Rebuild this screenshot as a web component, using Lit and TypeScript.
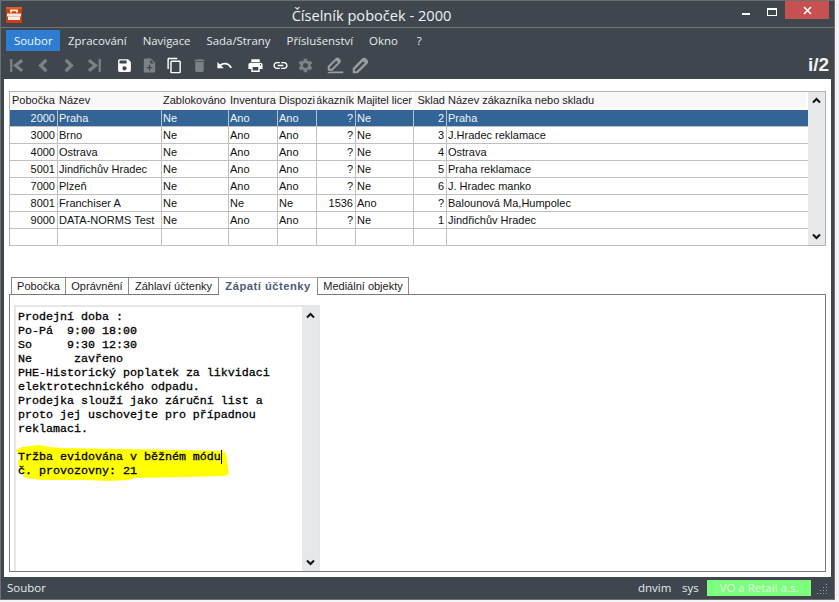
import { LitElement, html, css, svg } from "lit";
import { customElement } from "lit/decorators.js";

const I: Record<string, any> = {
  first: svg`<path d="M3 3h3.2v18H3z"/><path d="M20 4.5L10.5 12l9.5 7.5" fill="none" stroke="currentColor" stroke-width="4.4"/>`,
  prev: svg`<path d="M16 4l-8 8 8 8" fill="none" stroke="currentColor" stroke-width="4.8"/>`,
  next: svg`<path d="M8 4l8 8-8 8" fill="none" stroke="currentColor" stroke-width="4.8"/>`,
  last: svg`<path d="M17.8 3H21v18h-3.2z"/><path d="M4 4.5L13.5 12 4 19.5" fill="none" stroke="currentColor" stroke-width="4.4"/>`,
  save: svg`<path d="M17 3H5c-1.11 0-2 .9-2 2v14c0 1.1.89 2 2 2h14c1.1 0 2-.9 2-2V7l-4-4zm-5 16c-1.66 0-3-1.34-3-3s1.34-3 3-3 3 1.34 3 3-1.34 3-3 3zm3-10H5V5h10v4z"/>`,
  add: svg`<path d="M14 2H6c-1.1 0-2 .9-2 2v16c0 1.1.9 2 2 2h12c1.1 0 2-.9 2-2V8l-6-6zm2 14h-3v3h-2v-3H8v-2h3v-3h2v3h3v2zm-3-7V3.5L18.5 9H13z"/>`,
  copy: svg`<path d="M16 1H4c-1.1 0-2 .9-2 2v14h2V3h12V1zm3 4H8c-1.1 0-2 .9-2 2v14c0 1.1.9 2 2 2h11c1.1 0 2-.9 2-2V7c0-1.1-.9-2-2-2zm0 16H8V7h11v14z"/>`,
  trash: svg`<path d="M6 19c0 1.1.9 2 2 2h8c1.1 0 2-.9 2-2V7H6v12zM19 4h-3.5l-1-1h-5l-1 1H5v2h14V4z"/>`,
  undo: svg`<path d="M12.5 8c-2.65 0-5.05.99-6.9 2.6L2 7v9h9l-3.62-3.62c1.39-1.16 3.16-1.88 5.12-1.88 3.54 0 6.55 2.31 7.6 5.5l2.37-.78C21.08 11.03 17.15 8 12.5 8z"/>`,
  print: svg`<path d="M19 8H5c-1.66 0-3 1.34-3 3v6h4v4h12v-4h4v-6c0-1.66-1.34-3-3-3zm-3 11H8v-5h8v5zm3-7c-.55 0-1-.45-1-1s.45-1 1-1 1 .45 1 1-.45 1-1 1zm-1-9H6v4h12V3z"/>`,
  link: svg`<path d="M3.9 12c0-1.71 1.39-3.1 3.1-3.1h4V7H7c-2.76 0-5 2.24-5 5s2.24 5 5 5h4v-1.9H7c-1.71 0-3.1-1.39-3.1-3.1zM8 13h8v-2H8v2zm9-6h-4v1.9h4c1.71 0 3.1 1.39 3.1 3.1s-1.39 3.1-3.1 3.1h-4V17h4c2.76 0 5-2.24 5-5s-2.24-5-5-5z"/>`,
  gear: svg`<path d="M19.14 12.94c.04-.3.06-.61.06-.94 0-.32-.02-.64-.07-.94l2.03-1.58a.49.49 0 0 0 .12-.61l-1.92-3.32a.488.488 0 0 0-.59-.22l-2.39.96c-.5-.38-1.03-.7-1.62-.94l-.36-2.54a.484.484 0 0 0-.48-.41h-3.84c-.24 0-.43.17-.47.41l-.36 2.54c-.59.24-1.13.57-1.62.94l-2.39-.96c-.22-.08-.47 0-.59.22L2.74 8.87c-.12.21-.08.47.12.61l2.03 1.58c-.05.3-.09.63-.09.94s.02.64.07.94l-2.03 1.58a.49.49 0 0 0-.12.61l1.92 3.32c.12.22.37.29.59.22l2.39-.96c.5.38 1.03.7 1.62.94l.36 2.54c.05.24.24.41.48.41h3.84c.24 0 .44-.17.47-.41l.36-2.54c.59-.24 1.13-.56 1.62-.94l2.39.96c.22.08.47 0 .59-.22l1.92-3.32c.12-.22.07-.47-.12-.61l-2.01-1.58zM12 15.6c-1.98 0-3.6-1.62-3.6-3.6s1.62-3.6 3.6-3.6 3.6 1.62 3.6 3.6-1.62 3.6-3.6 3.6z"/>`,
  penline: svg`<path d="M1 19v-6L12 2c1.5-1.5 3.8-1.5 5.3 0l1.2 1.2c1.5 1.5 1.5 3.8 0 5.3L7.5 19.5H2zM4 14v2.5h2.5l9-9L13 5z" fill-rule="evenodd"/><path d="M6 20.5h17V23H1v-1.5z"/>`,
  pen: svg`<path d="M1 23v-7L14 2.5c1.8-1.8 4.6-1.8 6.4 0l1 1c1.8 1.8 1.8 4.6 0 6.4L8 23H1zM4 17.5V20h2.5L18 8.5 15.5 6 4 17.5z" fill-rule="evenodd"/>`,
};

const tools: [string, string, number][] = [
  ["first", "dim", 9.5], ["prev", "dim", 8], ["next", "dim", 9], ["last", "dim", 13],
  ["save", "on", 8], ["add", "dim", 8], ["copy", "on", 8], ["trash", "dim", 8],
  ["undo", "on", 14], ["print", "on", 8], ["link", "on", 8], ["gear", "dim", 13],
  ["penline", "pale", 8], ["pen", "pale", 0],
];

const cols = ["Pobočka", "Název", "Zablokováno", "Inventura", "Dispozice", "Zákazník", "Majitel licence", "Sklad", "Název zákazníka nebo skladu"];
const rows = [
  ["2000", "Praha", "Ne", "Ano", "Ano", "?", "Ne", "2", "Praha"],
  ["3000", "Brno", "Ne", "Ano", "Ano", "?", "Ne", "3", "J.Hradec reklamace"],
  ["4000", "Ostrava", "Ne", "Ano", "Ano", "?", "Ne", "4", "Ostrava"],
  ["5001", "Jindřichův Hradec", "Ne", "Ano", "Ano", "?", "Ne", "5", "Praha reklamace"],
  ["7000", "Plzeň", "Ne", "Ano", "Ano", "?", "Ne", "6", "J. Hradec manko"],
  ["8001", "Franchiser A", "Ne", "Ne", "Ne", "1536", "Ano", "?", "Balounová Ma,Humpolec"],
  ["9000", "DATA-NORMS Test", "Ne", "Ano", "Ano", "?", "Ne", "1", "Jindřichův Hradec"],
  ["", "", "", "", "", "", "", "", ""],
];
const rightCols = new Set([0, 5, 7]);

const up = html`<svg width="9" height="7" viewBox="0 0 9 7"><path d="M1 5.5l3.5-3.5 3.5 3.5" fill="none" stroke="#111" stroke-width="2"/></svg>`;
const down = html`<svg width="9" height="7" viewBox="0 0 9 7"><path d="M1 1.5l3.5 3.5 3.5-3.5" fill="none" stroke="#111" stroke-width="2"/></svg>`;

const footer = `Prodejní doba :
Po-Pá  9:00 18:00
So     9:30 12:30
Ne      zavřeno
PHE-Historický poplatek za likvidaci
elektrotechnického odpadu.
Prodejka slouží jako záruční list a
proto jej uschovejte pro případnou
reklamaci.

Tržba evidována v běžném módu`;

@customElement("app-root")
export class AppRoot extends LitElement {
  static styles = css`
    :host { display: block; width: 839px; height: 602px; background: #f4f4f4; overflow: hidden; }
    .win { width: 835px; height: 600px; box-sizing: border-box; background: #3f464e; border: 1px solid #6d6f72; display: flex; flex-direction: column; font-family: "Open Sans", sans-serif; color: #e8ecef; position: relative; }
    .title { height: 26px; flex: none; border-bottom: 1px solid #73777b; display: flex; position: relative; }
    .logo { margin: 6px 0 0 5px; width: 16px; height: 16px; }
    .caption { position: absolute; left: 0; top: 3px; width: 741px; text-align: center; font-size: 14.6px; line-height: 22px; color: #eef2f5; }
    .ctl { position: absolute; top: 0; right: 5px; display: flex; align-items: flex-start; }
    .min { width: 8px; height: 2px; background: #fff; margin: 12px 17px 0 0; }
    .max { width: 8px; height: 5px; border: 1px solid #fff; border-top-width: 2px; margin: 7px 8px 0 0; }
    .close { width: 44px; height: 18px; background: #c75050; display: flex; align-items: center; justify-content: center; }
    .menu { height: 21px; flex: none; margin-top: 2px; padding-left: 5px; display: flex; font-size: 11.4px; line-height: 22px; }
    .menu span { padding: 0 8px; color: #e6eaee; }
    .menu span.on { background: #2f7dd0; color: #eef5fb; width: 38px; text-align: center; }
    .menu span.wide { padding-right: 11px; }
    .tools { height: 28px; flex: none; display: flex; align-items: center; padding: 1px 0 0 7px; box-sizing: border-box; position: relative; }
    .tools svg { width: 17px; height: 17px; fill: currentColor; flex: none; display: block; }
    .tools .on { color: #fff; }
    .tools .dim { color: #7e8286; }
    .tools .pale { color: #9a9ea2; }
    .ver { position: absolute; right: 5px; top: 2px; font: bold 19px/24px "Liberation Sans", sans-serif; color: #f2f2f2; }
    .content { flex: 1; min-height: 0; margin: 0 3px; background: #fff; padding: 12px 5px 5px 5px; display: flex; flex-direction: column; color: #111; font-family: "Liberation Sans", sans-serif; font-size: 11px; }
    .grid { height: 155px; flex: none; box-sizing: border-box; border: 1px solid #b3b3b3; border-bottom: 0; display: flex; }
    .table { flex: 1; min-width: 0; }
    .row { display: grid; grid-template-columns: 48px 104px 67px 49px 39px 39px 58px 33px 1fr; height: 17px; line-height: 16px; }
    .row.hd { height: 18px; }
    .cell { box-sizing: border-box; border-right: 1px solid #c0c0c0; border-bottom: 1px solid #c0c0c0; padding: 0 1px; overflow: hidden; white-space: nowrap; display: flex; }
    .cell.r { justify-content: flex-end; padding-right: 2px; }
    .cell:last-child { border-right: 0; }
    .hd .cell { background: #f8f8f8; border-right: 2px solid #fff; border-bottom: 2px solid #fff; color: #222; line-height: 16px; }
    .hd .cell:first-child { padding-left: 2px; }
    .hd .cell.r { padding-right: 0; }
    .sel .cell { background: #326496; color: #eef3f8; }
    .vbar { width: 17px; flex: none; background: #e6e8ea; display: flex; flex-direction: column; justify-content: space-between; align-items: center; padding: 5px 0; box-sizing: border-box; }
    .grid .vbar { border-bottom: 1px solid #b3b3b3; }
    .tabs { margin: 31px 0 0 2px; height: 17px; flex: none; display: grid; grid-template-columns: 55px 63px 90px 99px 91px; justify-content: start; line-height: 16px; position: relative; z-index: 1; }
    .tab { box-sizing: border-box; height: 17px; border: 1px solid #8a8a8a; border-bottom: 0; border-left: 0; text-align: center; white-space: nowrap; color: #222; }
    .tab:first-child { border-left: 1px solid #8a8a8a; }
    .tab.on { font-weight: bold; color: #4c5a78; height: 18px; background: #fff; border-top-color: #b8b8b8; font-size: 11.2px; letter-spacing: 0.5px; }
    .panel { flex: 1; min-height: 0; border: 1px solid #7b7b7b; padding: 10px 0 0 4px; }
    .memo { position: relative; width: 306px; height: 100%; box-sizing: border-box; border: 2px solid #e6e6e6; border-bottom: 0; display: flex; }
    .memo pre { flex: 1; min-width: 0; margin: 0; padding: 3px 0 0 2px; font: 400 11.67px/14px "Liberation Mono", monospace; color: #000; -webkit-text-stroke: 0.3px #000; position: relative; }
    .caret { display: inline-block; width: 1px; height: 14px; background: #000; vertical-align: top; }
    .hl { position: absolute; left: -4px; top: 135px; }
    .memo .vbar { width: 16px; }
    .status { height: 22px; flex: none; display: flex; align-items: center; font-size: 11.5px; line-height: 20px; box-sizing: border-box; color: #e6ebef; padding-left: 6px; position: relative; }
    .status .s1 { position: absolute; left: 637px; }
    .status .s2 { position: absolute; left: 681px; }
    .co { position: absolute; left: 706px; top: 3px; width: 104px; height: 16px; background: #7cff7c; color: #e0f6e0; text-align: center; line-height: 16px; }
    .grip { position: absolute; right: 6px; bottom: 5px; }
  `;

  render() {
    return html`<div class="win">
      <div class="title">
        <svg class="logo" viewBox="0 0 16 16"><rect width="16" height="16" fill="#c9400f"/><path d="M4 5.5V2.5h8v3h-2V4.3H6v1.2z" fill="#fbe8dc"/><path d="M1 6.5h14v3H1z" fill="#f8e4d8"/><path d="M2 9.5h12V13H2z" fill="#f6f0ec"/><path d="M0 0h16v2H0z" fill="#e4591c"/></svg>
        <div class="caption">Číselník poboček - 2000</div>
        <div class="ctl">
          <div class="min"></div><div class="max"></div>
          <div class="close"><svg width="9" height="9" viewBox="0 0 9 9"><path d="M1 1l7 7M8 1L1 8" stroke="#fff" stroke-width="1.6"/></svg></div>
        </div>
      </div>
      <div class="menu">
        <span class="on">Soubor</span><span>Zpracování</span><span>Navigace</span><span>Sada/Strany</span><span>Příslušenství</span><span class="wide">Okno</span><span>?</span>
      </div>
      <div class="tools">
        ${tools.map(([n, c, gap]) => html`<svg class=${c} viewBox="0 0 24 24" style="margin-right:${gap}px">${I[n]}</svg>`)}
        <div class="ver">i/2</div>
      </div>
      <div class="content">
        <div class="grid">
          <div class="table">
            <div class="row hd">${cols.map((c, i) => html`<div class="cell ${rightCols.has(i) && i !== 0 ? "r" : ""}">${c}</div>`)}</div>
            ${rows.map((r, ri) => html`<div class="row ${ri === 0 ? "sel" : ""}">${r.map((c, i) => html`<div class="cell ${rightCols.has(i) ? "r" : ""}">${c}</div>`)}</div>`)}
          </div>
          <div class="vbar">${up}${down}</div>
        </div>
        <div class="tabs">
          <div class="tab">Pobočka</div><div class="tab">Oprávnění</div><div class="tab">Záhlaví účtenky</div><div class="tab on">Zápatí účtenky</div><div class="tab">Mediální objekty</div>
        </div>
        <div class="panel">
          <div class="memo">
            <svg class="hl" width="224" height="44" viewBox="0 0 224 44"><path d="M4 8l6-3 8-1 10-1 9 2 12 1 60 1 60 1 41 1 4 2 1 6 1 8 1 7-4 2-40 1-50 1-6 2-22 1-20-1-45 0-17-2-3-5-3-6-1-5 2-5z" fill="#ffff00"/></svg>
            <pre>${footer}<span class="caret"></span>
č. provozovny: 21</pre>
            <div class="vbar">${up}${down}</div>
          </div>
        </div>
      </div>
      <div class="status">
        <span>Soubor</span><span class="s1">dnvim</span><span class="s2">sys</span>
        <div class="co">VO a Retail a.s.</div>
        <svg class="grip" width="11" height="11" viewBox="0 0 11 11" fill="#9aa0a6"><rect x="9" y="1" width="1" height="1"/><rect x="6" y="4" width="1" height="1"/><rect x="9" y="4" width="1" height="1"/><rect x="3" y="7" width="1" height="1"/><rect x="6" y="7" width="1" height="1"/><rect x="9" y="7" width="1" height="1"/><rect x="0" y="10" width="1" height="1"/><rect x="3" y="10" width="1" height="1"/><rect x="6" y="10" width="1" height="1"/><rect x="9" y="10" width="1" height="1"/></svg>
      </div>
    </div>`;
  }
}
